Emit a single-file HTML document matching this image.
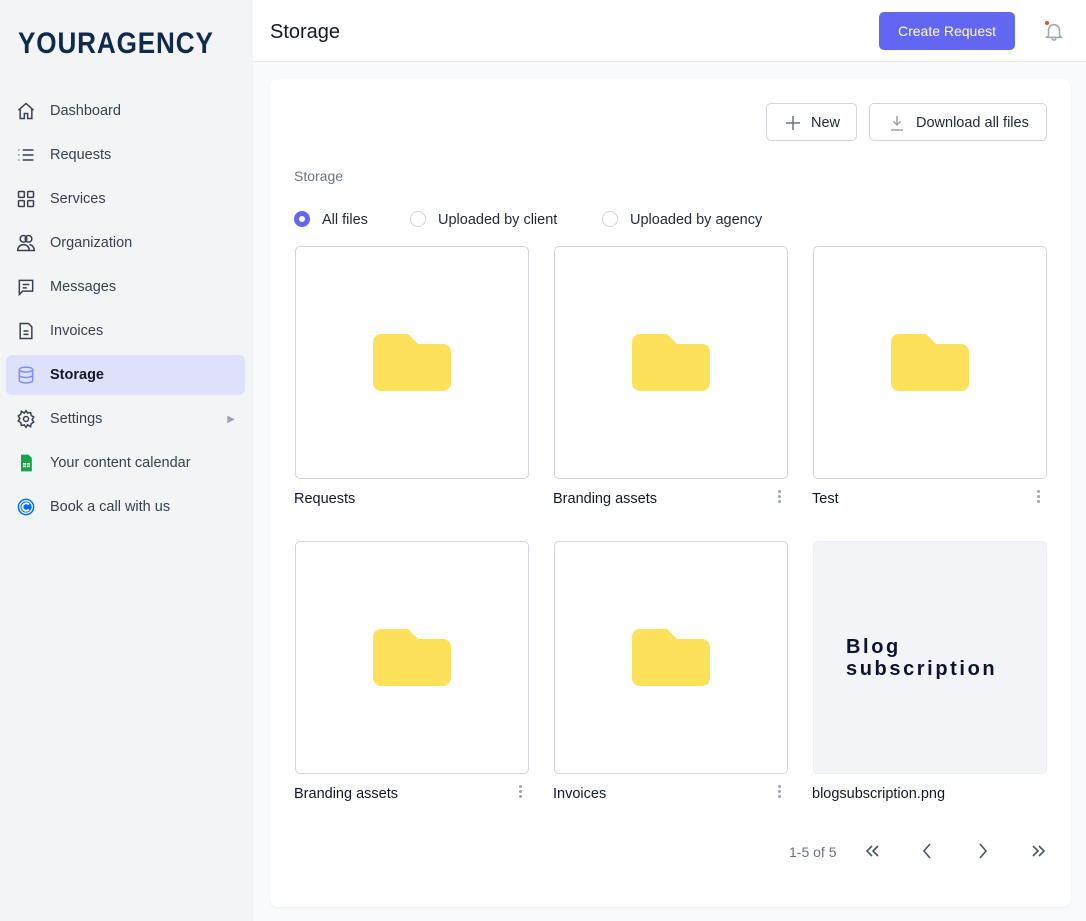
<!DOCTYPE html>
<html><head><meta charset="utf-8"><style>
*{box-sizing:border-box;margin:0;padding:0}
body{width:1086px;height:921px;overflow:hidden;background:#f9fafb;font-family:"Liberation Sans",sans-serif;position:relative;color:#111827}
.abs{position:absolute}
#side{left:0;top:0;width:253px;height:921px;background:#f3f4f6}
.logo{left:18px;top:27px;font-size:30px;font-weight:bold;color:#0f2a4a;letter-spacing:1px;transform:scaleX(0.87);transform-origin:left}
.nav{position:absolute;left:6px;width:239px;height:40px;display:flex;align-items:center;font-size:14.5px;color:#374151}
.nav svg{position:absolute;left:10px;top:10px}
.nav span{position:absolute;left:44px;top:12px}
.act{background:#dfe1fb;border-radius:6px;color:#111827;font-weight:bold}
#head{left:253px;top:0;right:0;height:62px;background:#fff;border-bottom:1px solid #e5e7eb}
.ttl{left:270px;top:21px;font-size:20px;color:#111827}
.btnp{left:879px;top:12px;width:136px;height:38px;background:#6366f1;border-radius:5px;color:#fff;font-size:14px;display:flex;align-items:center;justify-content:center}
#card{left:270px;top:79px;width:801px;height:828px;background:#fff;border-radius:8px;box-shadow:0 1px 2px rgba(0,0,0,.06)}
.ob{border:1px solid #d1d5db;border-radius:5px;height:38px;top:103px;font-size:14.5px;color:#1f2937;display:flex;align-items:center;padding-top:2px}
.radio{width:16px;height:16px;border-radius:50%;border:1px solid #d1d5db;top:211px}
.rl{top:212px;font-size:14.5px;color:#1f2937}
.tile{width:234px;height:233px;border:1px solid #d1d5db;border-radius:5px;background:#fff}
.lbl{font-size:14.5px;color:#111827}
.dots{width:3px}
.dots i{display:block;width:3px;height:3px;background:#9ca3af;border-radius:50%;margin-bottom:2px}
</style></head><body>
<div id="side" class="abs"></div>
<div class="abs logo">YOURAGENCY</div>
<div class="nav" style="top:91px"><svg width="20" height="20" viewBox="0 0 24 24" fill="none" stroke="#374151" stroke-width="1.8"><path d="M3 11l9-8 9 8M5 9.5V21h5v-6h4v6h5V9.5"/></svg><span>Dashboard</span></div>
<div class="nav" style="top:135px"><svg width="20" height="20" viewBox="0 0 24 24" fill="none" stroke="#374151" stroke-width="1.8"><path d="M8 6h13M8 12h13M8 18h13M3 6h1M3 12h1M3 18h1"/></svg><span>Requests</span></div>
<div class="nav" style="top:179px"><svg width="20" height="20" viewBox="0 0 24 24" fill="none" stroke="#374151" stroke-width="1.8"><rect x="3" y="3" width="7" height="7" rx="1"/><rect x="14" y="3" width="7" height="7" rx="1"/><rect x="3" y="14" width="7" height="7" rx="1"/><rect x="14" y="14" width="7" height="7" rx="1"/></svg><span>Services</span></div>
<div class="nav" style="top:223px"><svg width="20" height="20" viewBox="0 0 24 24" fill="none" stroke="#374151" stroke-width="1.8"><circle cx="9" cy="7" r="4"/><circle cx="15" cy="7" r="4"/><path d="M2 21c0-4 3-7 7-7s7 3 7 7zM16 14c3 0 6 3 6 7h-5"/></svg><span>Organization</span></div>
<div class="nav" style="top:267px"><svg width="20" height="20" viewBox="0 0 24 24" fill="none" stroke="#374151" stroke-width="1.8"><path d="M4 4h16v13H8l-4 4zM8 9h8M8 13h5"/></svg><span>Messages</span></div>
<div class="nav" style="top:311px"><svg width="20" height="20" viewBox="0 0 24 24" fill="none" stroke="#374151" stroke-width="1.8"><path d="M5 3h10l4 4v14H5zM9 12h6M9 16h6"/></svg><span>Invoices</span></div>
<div class="nav act" style="top:355px"><svg width="20" height="20" viewBox="0 0 24 24" fill="none" stroke="#818cf8" stroke-width="1.8"><ellipse cx="12" cy="5.5" rx="8" ry="3"/><path d="M4 5.5v13c0 1.7 3.6 3 8 3s8-1.3 8-3v-13M4 12c0 1.7 3.6 3 8 3s8-1.3 8-3"/></svg><span>Storage</span></div>
<div class="nav" style="top:399px"><svg width="20" height="20" viewBox="0 0 24 24" fill="none" stroke="#374151" stroke-width="1.8"><circle cx="12" cy="12" r="3"/><path d="M12 2l2 3 3.5-.8.8 3.5 3 2-2 3 2 3-3 2-.8 3.5L14 19l-2 3-2-3-3.5.8-.8-3.5-3-2 2-3-2-3 3-2 .8-3.5L10 5z"/></svg><span>Settings</span><b style="position:absolute;right:10px;font-size:10px;color:#9ca3af;font-weight:normal">▶</b></div>
<div class="nav" style="top:443px"><svg width="20" height="20" viewBox="0 0 24 24"><path d="M6 2h9l4 4v16H6z" fill="#16a34a"/><rect x="8.5" y="12" width="8" height="5" fill="#fff"/><path d="M12.5 12v5M8.5 14.5h8" stroke="#16a34a" stroke-width="1"/></svg><span>Your content calendar</span></div>
<div class="nav" style="top:487px"><svg width="20" height="20" viewBox="0 0 24 24"><circle cx="12" cy="12" r="10" fill="#006bff"/><circle cx="12" cy="12" r="7.5" fill="none" stroke="#fff" stroke-width="1.5"/><path d="M15.5 9a4.5 4.5 0 1 0 0 6" fill="none" stroke="#fff" stroke-width="2.2"/></svg><span>Book a call with us</span></div>

<div id="head" class="abs"></div>
<div class="abs ttl">Storage</div>
<div class="abs btnp">Create Request</div>
<svg class="abs" style="left:1043px;top:20px" width="22" height="22" viewBox="0 0 24 24" fill="none" stroke="#9ca3af" stroke-width="1.6"><path d="M6 17V11a6 6 0 0 1 12 0v6l2 2H4zM10 20a2 2 0 0 0 4 0"/></svg>
<div class="abs" style="left:1045px;top:21px;width:4px;height:4px;border-radius:50%;background:#ef4444"></div>

<div id="card" class="abs"></div>
<div class="abs ob" style="left:766px;width:91px;padding-left:18px"><svg width="16" height="16" viewBox="0 0 16 16" stroke="#6b7280" stroke-width="1.5"><path d="M8 1v14M1 8h14"/></svg><span style="margin-left:10px">New</span></div>
<div class="abs ob" style="left:869px;width:178px;padding-left:19px"><svg width="16" height="16" viewBox="0 0 16 16" fill="none" stroke="#9ca3af" stroke-width="1.5"><path d="M8 1v9M4.5 6.5L8 10l3.5-3.5M2 15h12"/></svg><span style="margin-left:11px">Download all files</span></div>
<div class="abs" style="left:294px;top:168px;font-size:14px;color:#6b7280">Storage</div>
<div class="abs radio" style="left:294px;border:5px solid #6366f1"></div>
<div class="abs rl" style="left:322px">All files</div>
<div class="abs radio" style="left:410px"></div>
<div class="abs rl" style="left:438px">Uploaded by client</div>
<div class="abs radio" style="left:602px"></div>
<div class="abs rl" style="left:630px">Uploaded by agency</div>

<div class="abs tile" style="left:295px;top:246px"></div>
<div class="abs tile" style="left:554px;top:246px"></div>
<div class="abs tile" style="left:813px;top:246px"></div>
<div class="abs tile" style="left:295px;top:541px"></div>
<div class="abs tile" style="left:554px;top:541px"></div>
<div class="abs tile" style="left:813px;top:541px;background:#f3f4f8;border-color:#eceef3"></div>

<svg class="abs" style="left:373px;top:333px" width="78" height="58" viewBox="0 0 78 58"><path d="M0 9a8 8 0 0 1 8-8h27l10 10h25a8 8 0 0 1 8 8v31a8 8 0 0 1-8 8H8a8 8 0 0 1-8-8z" fill="#fde15b"/></svg>
<svg class="abs" style="left:632px;top:333px" width="78" height="58" viewBox="0 0 78 58"><path d="M0 9a8 8 0 0 1 8-8h27l10 10h25a8 8 0 0 1 8 8v31a8 8 0 0 1-8 8H8a8 8 0 0 1-8-8z" fill="#fde15b"/></svg>
<svg class="abs" style="left:891px;top:333px" width="78" height="58" viewBox="0 0 78 58"><path d="M0 9a8 8 0 0 1 8-8h27l10 10h25a8 8 0 0 1 8 8v31a8 8 0 0 1-8 8H8a8 8 0 0 1-8-8z" fill="#fde15b"/></svg>
<svg class="abs" style="left:373px;top:628px" width="78" height="58" viewBox="0 0 78 58"><path d="M0 9a8 8 0 0 1 8-8h27l10 10h25a8 8 0 0 1 8 8v31a8 8 0 0 1-8 8H8a8 8 0 0 1-8-8z" fill="#fde15b"/></svg>
<svg class="abs" style="left:632px;top:628px" width="78" height="58" viewBox="0 0 78 58"><path d="M0 9a8 8 0 0 1 8-8h27l10 10h25a8 8 0 0 1 8 8v31a8 8 0 0 1-8 8H8a8 8 0 0 1-8-8z" fill="#fde15b"/></svg>
<div class="abs" style="left:846px;top:636px;font-size:20px;font-weight:bold;color:#0b1330;letter-spacing:2.6px;line-height:22px">Blog<br>subscription</div>

<div class="abs lbl" style="left:294px;top:491px">Requests</div>
<div class="abs lbl" style="left:553px;top:491px">Branding assets</div>
<div class="abs lbl" style="left:812px;top:491px">Test</div>
<div class="abs lbl" style="left:294px;top:786px">Branding assets</div>
<div class="abs lbl" style="left:553px;top:786px">Invoices</div>
<div class="abs lbl" style="left:812px;top:786px">blogsubscription.png</div>
<div class="abs dots" style="left:778px;top:490px"><i></i><i></i><i></i></div>
<div class="abs dots" style="left:1037px;top:490px"><i></i><i></i><i></i></div>
<div class="abs dots" style="left:519px;top:785px"><i></i><i></i><i></i></div>
<div class="abs dots" style="left:778px;top:785px"><i></i><i></i><i></i></div>

<div class="abs" style="left:789px;top:844px;font-size:14px;color:#6b7280">1-5 of 5</div>
<svg class="abs" style="left:864px;top:843px" width="18" height="16" viewBox="0 0 18 16" fill="none" stroke="#4b5563" stroke-width="1.6"><path d="M8 3L3 8l5 5M14 3L9 8l5 5"/></svg>
<svg class="abs" style="left:920px;top:842px" width="14" height="18" viewBox="0 0 14 18" fill="none" stroke="#4b5563" stroke-width="1.6"><path d="M10 2L4 9l6 7"/></svg>
<svg class="abs" style="left:976px;top:842px" width="14" height="18" viewBox="0 0 14 18" fill="none" stroke="#4b5563" stroke-width="1.6"><path d="M4 2l6 7-6 7"/></svg>
<svg class="abs" style="left:1029px;top:843px" width="18" height="16" viewBox="0 0 18 16" fill="none" stroke="#4b5563" stroke-width="1.6"><path d="M4 3l5 5-5 5M10 3l5 5-5 5"/></svg>
</body></html>
